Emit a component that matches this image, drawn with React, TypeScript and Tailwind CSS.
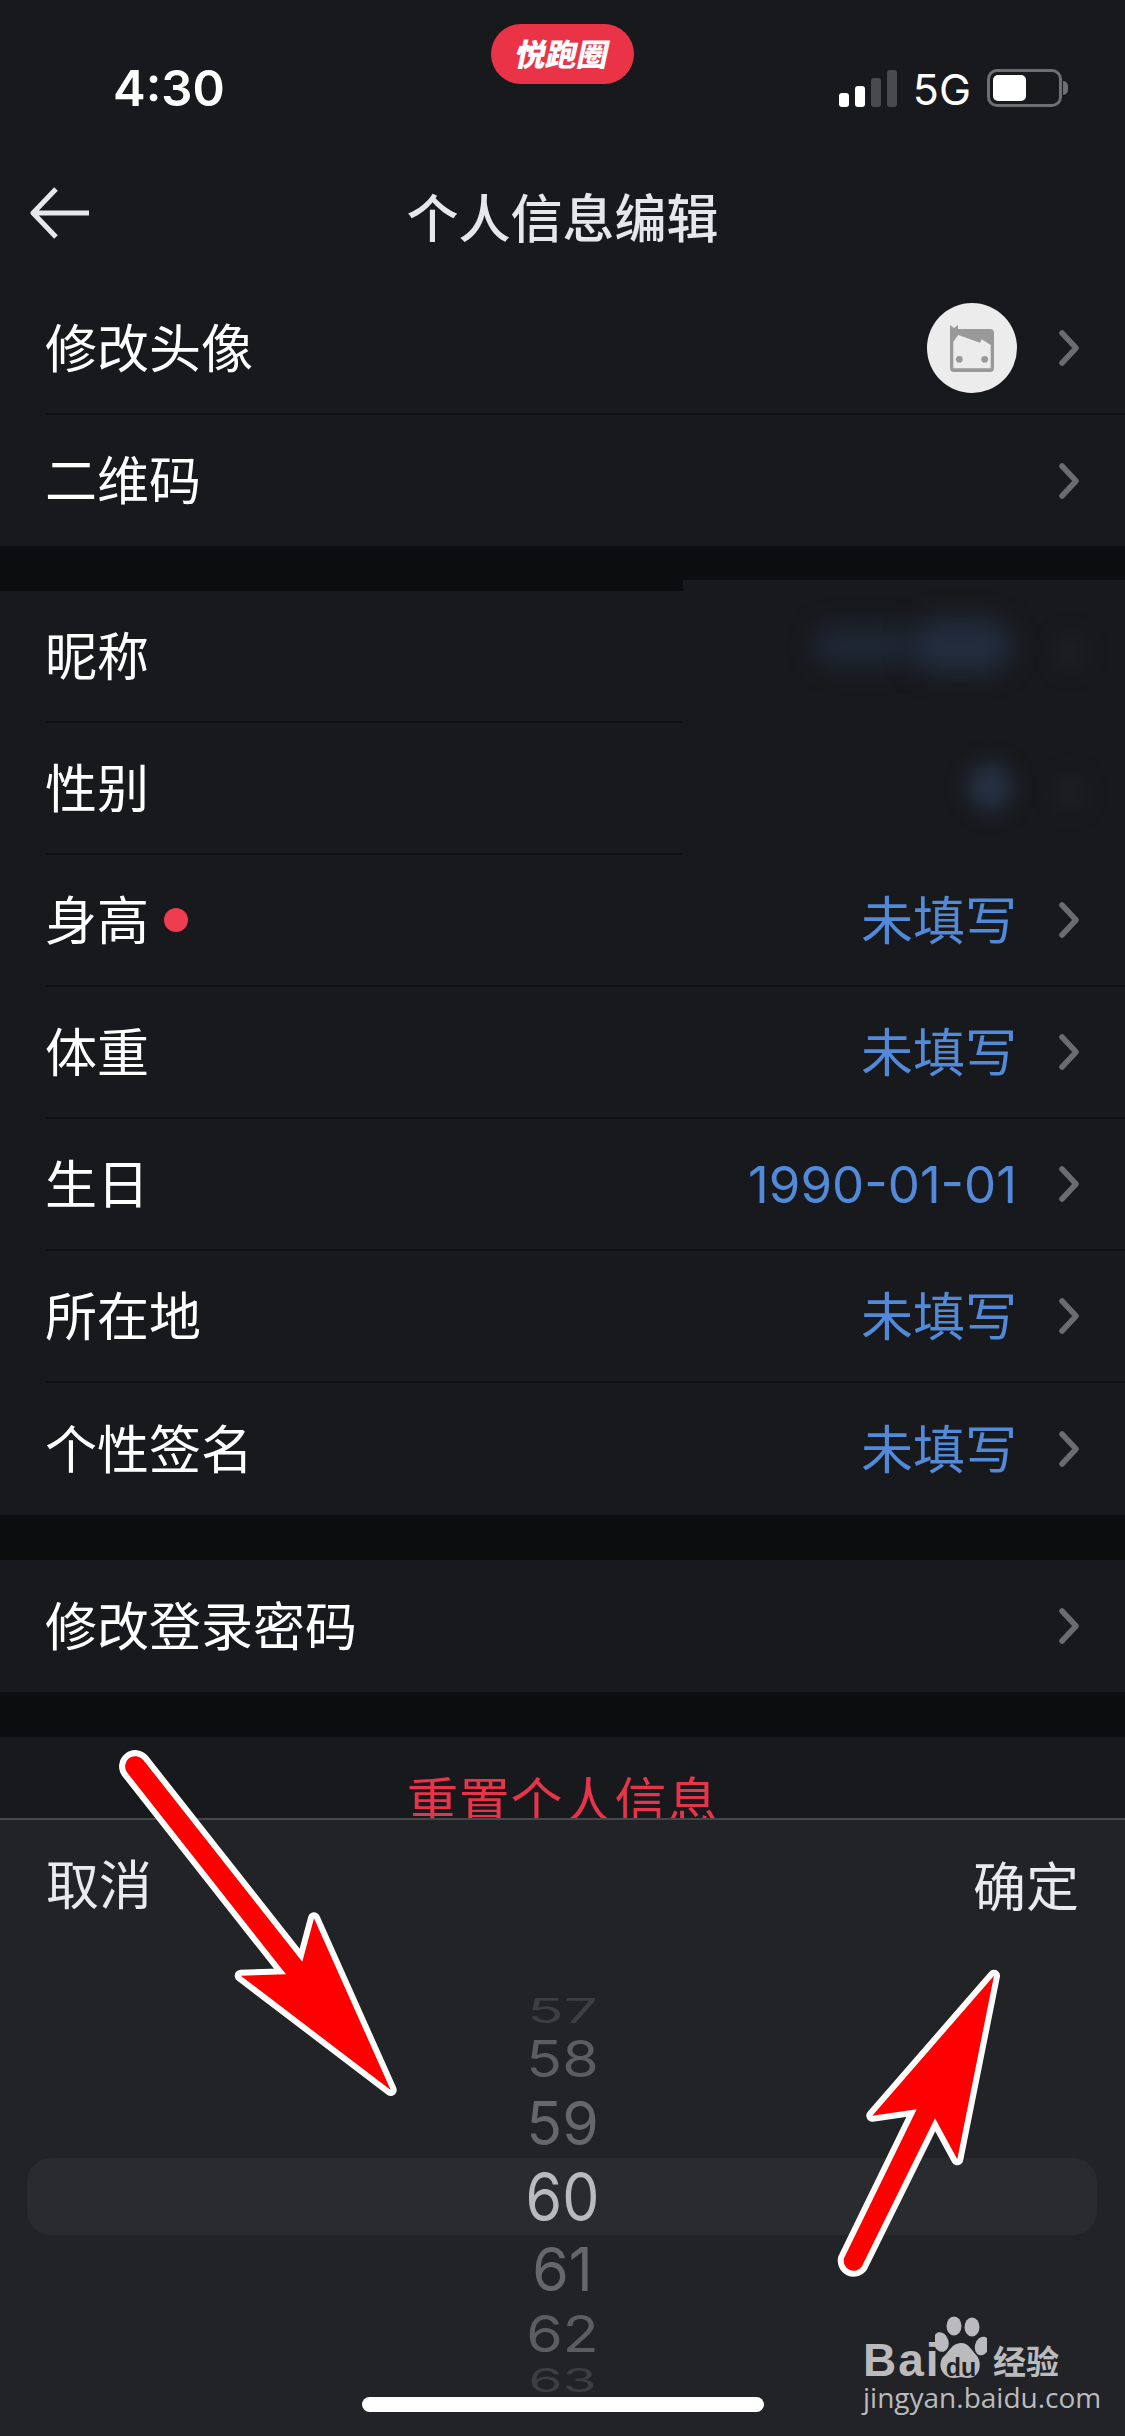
type Row = { label: string; value?: string; dot?: boolean };

const profileRows: Row[] = [
  { label: "昵称" },
  { label: "性别" },
  { label: "身高", value: "未填写", dot: true },
  { label: "体重", value: "未填写" },
  { label: "生日", value: "1990-01-01" },
  { label: "所在地", value: "未填写" },
  { label: "个性签名", value: "未填写" },
];

const wheel = [
  { n: 57, cls: "h-[48px] text-[#3d3e42] text-[60px] scale-y-[0.57]" },
  { n: 58, cls: "h-[48px] text-[#5c5d61] text-[59px] scale-y-[0.86]" },
  { n: 59, cls: "h-[80px] text-[#66676b] text-[59px] scale-y-[1.03]" },
  { n: 60, cls: "h-[68px] text-[#b9babd] text-[59px] scale-y-[1.1]" },
  { n: 61, cls: "h-[76px] text-[#66676b] text-[59px] scale-y-[1.03]" },
  { n: 62, cls: "h-[54px] text-[#5c5d61] text-[59px] scale-y-[0.86]" },
  { n: 63, cls: "h-[40px] text-[#3d3e42] text-[55px] scale-y-[0.58]" },
];

function Chevron() {
  return (
    <svg width="20" height="36" viewBox="0 0 20 36" className="shrink-0">
      <polyline points="3,3 17,18 3,33" fill="none" stroke="#6c6c6f" strokeWidth="5.5" strokeLinecap="round" strokeLinejoin="round" />
    </svg>
  );
}

function ListRow({ row, last, short }: { row: Row; last?: boolean; short?: boolean }) {
  return (
    <div className={`ml-[45px] pr-[46px] flex items-center justify-between ${short ? "h-[131px]" : "h-[132px]"} ${last ? "" : "border-b-2 border-[#0f1012]"}`}>
      <div className="flex items-center gap-[15px] text-[52px] text-white">
        <span className="pt-[3px]">{row.label}</span>
        {row.dot && <span className="w-6 h-6 rounded-full bg-[#ee3d4f]" />}
      </div>
      <div className="flex items-center gap-[42px]">
        {row.value && (
          <span className={`pt-[3px] text-[#5289d8] ${row.value.includes("-") ? "text-[51px]" : "text-[52px]"}`}>{row.value}</span>
        )}
        <Chevron />
      </div>
    </div>
  );
}

function Avatar() {
  return (
    <svg width="90" height="90" viewBox="0 0 90 90">
      <circle cx="45" cy="45" r="45" fill="#ececec" />
      <path d="M23 22l4 3 4-3v4h32a4 4 0 0 1 4 4v35a4 4 0 0 1-4 4H27a4 4 0 0 1-4-4z" fill="#999" />
      <path d="M26.3 38.7L31.3 32 53 39.7l1.7-3.4 9 5.7v23.3H26.3z" fill="#ececec" />
      <circle cx="32.3" cy="56.3" r="3.4" fill="#999" />
      <circle cx="57.7" cy="56.3" r="3.4" fill="#999" />
    </svg>
  );
}

function StatusBar() {
  return (
    <div className="h-[107px] grid grid-cols-3 items-end">
      <div className="pl-[113px] text-[49px] leading-[36px] font-semibold text-white">4:30</div>
      <div className="self-start flex justify-center pt-[24px]">
        <div className="w-[143px] h-[60px] rounded-full bg-[#ea3347] flex items-center justify-center">
          <span className="text-[31px] leading-none font-black text-white -skew-x-12">悦跑圈</span>
        </div>
      </div>
      <div className="flex items-end justify-end pr-[63px]">
        <div className="flex items-end gap-[6px] mr-[16px]">
          <div className="w-[10px] h-[14px] rounded-[3px] bg-white" />
          <div className="w-[10px] h-[21px] rounded-[3px] bg-white" />
          <div className="w-[10px] h-[29px] rounded-[3px] bg-[#4a4a4c]" />
          <div className="w-[10px] h-[37px] rounded-[3px] bg-[#4a4a4c]" />
        </div>
        <span className="text-[43px] leading-[36px] text-white mr-[16px]">5G</span>
        <div className="relative w-[75px] h-[38px] rounded-[10px] border-[3px] border-[#6f6f71] p-[3px]">
          <div className="w-[33px] h-full rounded-[5px] bg-white" />
          <div className="absolute -right-[9px] top-[9px] w-[5px] h-[14px] rounded-r-full bg-[#6f6f71]" />
        </div>
      </div>
    </div>
  );
}

function Arrows() {
  return (
    <svg width="1125" height="2436" viewBox="0 0 1125 2436" className="absolute inset-0 pointer-events-none">
      <g fill="#ff0000" stroke="#ffffff" strokeWidth="12" strokeLinejoin="round" paintOrder="stroke">
        <path d="M143.3 1760L302.3 1961.7 314 1918.3 390.7 2090 240.7 1975.7 286 1974.3 127.3 1772.7A10 10 0 0 1 143.3 1760z" />
        <path d="M994 1975.7L957.3 2159.3 935 2118.3 861.7 2266.7A10 10 0 0 1 844 2258.3L916.7 2109.3 872.3 2115.7z" />
      </g>
    </svg>
  );
}

function Watermark() {
  return (
    <div className="absolute left-[863px] top-[2316px] w-[204px] text-[#bbbbbd]">
      <div className="flex items-end h-[64px]">
        <span className="w-[72px] text-[46px] leading-[40px] tracking-[2px] font-bold [font-family:'Liberation_Sans',sans-serif]">Bai</span>
        <svg width="52" height="64" viewBox="0 0 52 64" className="shrink-0">
          <ellipse cx="19" cy="10" rx="7.5" ry="9.5" fill="#bbbbbd" />
          <ellipse cx="37" cy="11" rx="7.5" ry="9.5" fill="#bbbbbd" />
          <ellipse cx="6" cy="26" rx="7.5" ry="10" fill="#bbbbbd" transform="rotate(-15 6 26)" />
          <ellipse cx="47" cy="30" rx="7" ry="9.5" fill="#bbbbbd" transform="rotate(15 47 30)" />
          <path d="M26 27c8 0 11 8 16 13 5 6 4 22-9 22-3 0-5-1-7-1s-4 1-7 1C7 62 2 49 8 41c6-5 9-14 18-14z" fill="#bbbbbd" />
          <text x="26" y="60" textAnchor="middle" fontSize="25" fontWeight="700" fontFamily="Liberation Sans" fill="#212327">du</text>
        </svg>
        <span className="ml-[6px] text-[33px] leading-[36px] font-bold whitespace-nowrap">经验</span>
      </div>
      <div className="text-[28px] leading-[34px] whitespace-nowrap [font-family:'Open_Sans',sans-serif]">jingyan.baidu.com</div>
    </div>
  );
}

function BlurredPatch() {
  return (
    <div className="absolute left-[683px] top-[580px] w-[442px] h-[275px] overflow-hidden bg-[#17191c]">
      <div className="absolute left-[130px] top-[45px] w-[100px] h-[42px] rounded-full bg-[#1f2735] blur-[12px]" />
      <div className="absolute left-[225px] top-[38px] w-[105px] h-[56px] rounded-full bg-[#222c3c] blur-[12px]" />
      <div className="absolute left-[372px] top-[55px] w-[30px] h-[35px] rounded-full bg-[#1f1f21] blur-[10px]" />
      <div className="absolute left-[284px] top-[182px] w-[46px] h-[50px] rounded-full bg-[#253041] blur-[10px]" />
      <div className="absolute left-[372px] top-[195px] w-[30px] h-[35px] rounded-full bg-[#1f1f21] blur-[10px]" />
    </div>
  );
}

function PickerSheet() {
  return (
    <div className="absolute left-0 right-0 top-[1818px] bottom-0 bg-[#212327] border-t-2 border-[#47484c]">
      <div className="flex justify-between items-center px-[46px] pt-[34px] text-[53px] leading-[60px] text-[#e9eaec]">
        <span>取消</span>
        <span className="pt-[4px]">确定</span>
      </div>
      <div className="relative mt-[68px] flex flex-col items-center">
        <div className="absolute left-[27px] right-[28px] top-[172px] h-[77px] rounded-[24px] bg-[#2a2b2f]" />
        {wheel.map((w) => (
          <div key={w.n} className={`relative flex items-center justify-center leading-none ${w.cls}`}>
            {w.n}
          </div>
        ))}
      </div>
      <div className="absolute left-[362px] top-[577px] w-[402px] h-[15px] rounded-full bg-white" />
    </div>
  );
}

export default function App() {
  return (
    <div className="relative w-[1125px] h-[2436px] overflow-hidden bg-[#0c0d0f] [font-family:Inter,'Noto_Sans_CJK_SC',sans-serif]">
      <div className="bg-[#18191d]">
        <StatusBar />
        <div className="h-[176px] pt-[80px] grid grid-cols-[1fr_auto_1fr] items-start">
          <svg width="60" height="52" viewBox="0 0 60 52" className="ml-[30px]">
            <path d="M26 2L3 26l23 24M3 26h56" fill="none" stroke="#e5e7eb" strokeWidth="5" strokeLinejoin="round" />
          </svg>
          <div className="pt-[3px] text-[52px] leading-[60px] font-medium text-[#e5e7eb]">个人信息编辑</div>
        </div>
        <ListRow row={{ label: "修改头像" }} />
        <ListRow row={{ label: "二维码" }} last short />
      </div>
      <div className="mt-[45px] bg-[#18191d]">
        {profileRows.map((row, i) => (
          <ListRow key={row.label} row={row} last={i === profileRows.length - 1} />
        ))}
      </div>
      <div className="mt-[45px] bg-[#18191d]">
        <ListRow row={{ label: "修改登录密码" }} last />
      </div>
      <div className="mt-[45px] h-[132px] bg-[#18191d] flex items-center justify-center text-[52px] text-[#e8344a]">重置个人信息</div>

      <div className="absolute left-[927px] top-[303px]">
        <Avatar />
      </div>
      <BlurredPatch />
      <PickerSheet />
      <Arrows />
      <Watermark />
    </div>
  );
}
